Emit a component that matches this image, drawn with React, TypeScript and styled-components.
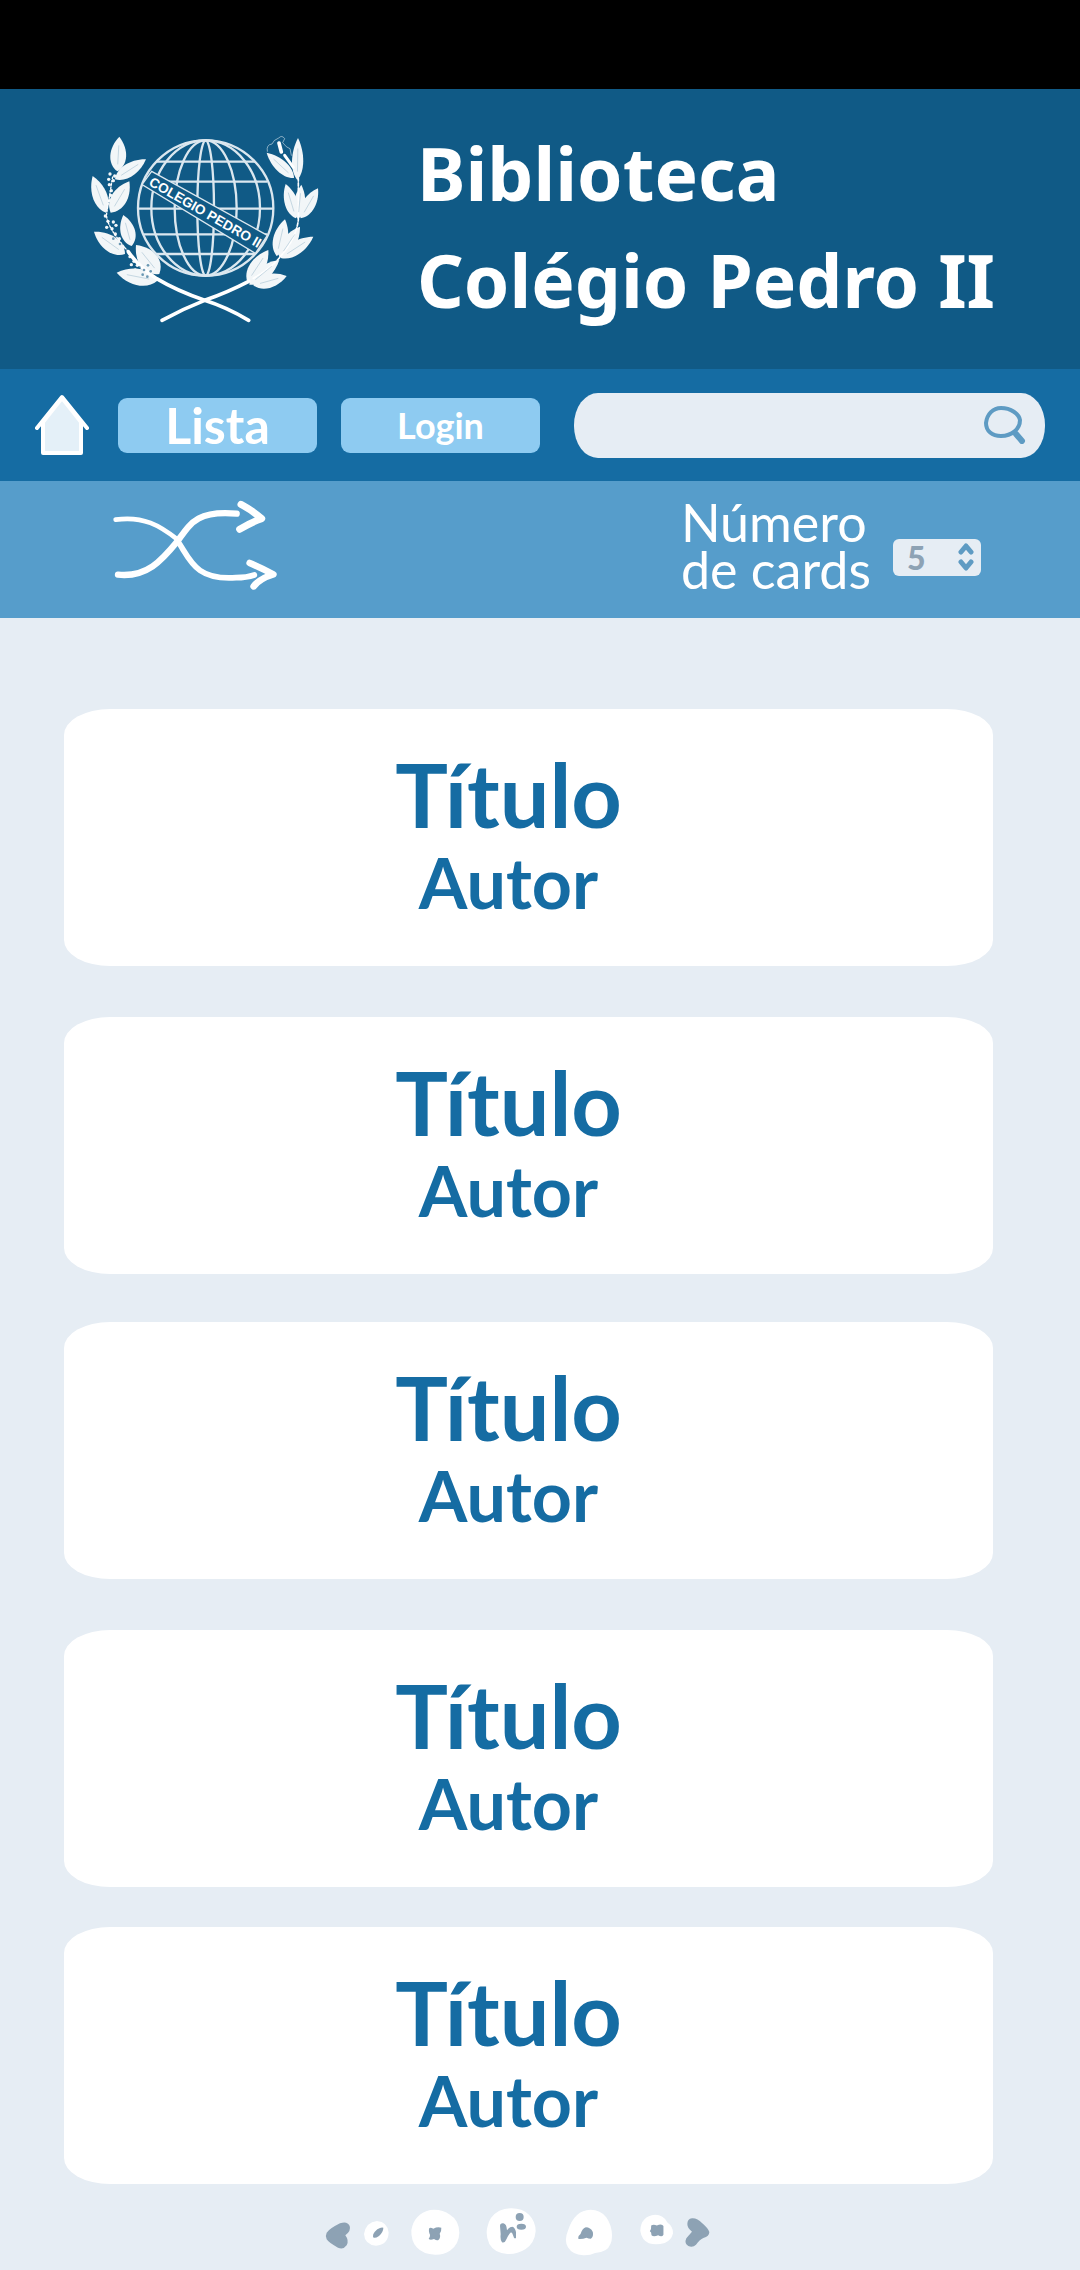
import React from "react";
import styled, { createGlobalStyle } from "styled-components";

const color = {
  header: "#105a86",
  nav: "#156ca3",
  tools: "#569dcb",
  page: "#e6edf4",
  button: "#8ecbf1",
  accent: "#5e9bc3",
  muted: "#8da2b4",
};

const hand = `Lato, "Open Sans", sans-serif`;

const GlobalStyle = createGlobalStyle`
  *, *::before, *::after { box-sizing: border-box; }
  body { margin: 0; background: ${color.page}; font-family: ${hand}; }
`;

const Page = styled.div`
  min-height: 100vh;
  background: ${color.page};
`;

const StatusBar = styled.div`
  height: 89px;
  background: #000;
`;

const Header = styled.header`
  display: flex;
  align-items: center;
  gap: 97px;
  padding: 30px 40px 36px 90px;
  background: ${color.header};
  color: #fff;
`;

const Crest = styled.svg`
  flex: none;
  width: 230px;
  height: 200px;
`;

const SiteTitle = styled.h1`
  margin: 0;
  font: 700 73px/107px "Noto Sans", sans-serif;
`;

const Line = styled.span`
  display: block;
  white-space: nowrap;
`;

const Nav = styled.nav`
  display: flex;
  align-items: center;
  height: 112px;
  padding: 0 35px;
  background: ${color.nav};
`;

const HomeLink = styled.a`
  display: block;
  height: 62px;
  margin-right: 29px;
`;

const Drawing = styled.svg`
  display: block;
`;

const NavButton = styled.button<{ $size: number }>`
  flex: none;
  width: 199px;
  height: 55px;
  margin-right: 24px;
  padding: 0;
  border: 0;
  border-radius: 9px;
  background: ${color.button};
  color: #fff;
  font: 700 ${(p) => p.$size}px/55px ${hand};
`;

const SearchForm = styled.form`
  flex: 1;
  display: flex;
  align-items: center;
  min-width: 0;
  height: 65px;
  margin-left: 10px;
  padding: 0 19px 0 24px;
  border-radius: 24px / 32px;
  background: ${color.page};
`;

const SearchInput = styled.input`
  flex: 1;
  min-width: 0;
  border: 0;
  outline: 0;
  background: transparent;
  color: ${color.nav};
  font: 32px/40px ${hand};
`;

const IconButton = styled.button`
  display: block;
  padding: 0;
  border: 0;
  background: transparent;
`;

const Tools = styled.section`
  display: flex;
  align-items: center;
  justify-content: space-between;
  height: 137px;
  padding: 0 99px 7px 110px;
  background: ${color.tools};
`;

const CountField = styled.div`
  display: flex;
  align-items: flex-end;
  gap: 22px;
`;

const CountLabel = styled.label`
  color: #fff;
  font: 52px/47px ${hand};
`;

const SelectBox = styled.div`
  position: relative;
  width: 88px;
  height: 37px;
  margin-bottom: 17px;
`;

const CountSelect = styled.select`
  appearance: none;
  width: 100%;
  height: 100%;
  padding: 0 0 0 14px;
  border: 0;
  border-radius: 6px;
  background: ${color.page};
  color: ${color.muted};
  font: 900 32px/37px ${hand};
`;

const Chevrons = styled.svg`
  position: absolute;
  top: 4px;
  right: 7px;
  pointer-events: none;
`;

const Cards = styled.main`
  display: flex;
  flex-direction: column;
  padding: 91px 87px 0 64px;
`;

const Card = styled.article`
  display: flex;
  flex-direction: column;
  justify-content: center;
  align-items: center;
  height: 257px;
  padding-right: 40px;
  border-radius: 46px / 26px;
  background: #fff;
  color: ${color.nav};

  & + & { margin-top: 51px; }
  &:nth-child(odd) { margin-top: 48px; }
  &:first-child { margin-top: 0; }
  &:last-child { margin-top: 40px; }
`;

const BookTitle = styled.h2`
  margin: 0;
  font: 700 88px/88px ${hand};
`;

const Author = styled.p`
  margin: 0;
  font: 700 70px/88px ${hand};
`;

const Pager = styled.nav`
  display: flex;
  justify-content: center;
  padding: 24px 44px 14px 0;
`;

type Leaf = [number, number, number, number, number];

const leaves: Leaf[] = [
  [172, 184, 178, 80, 48], [165, 208, 258, 148, 40], [138, 308, 98, 198, 44],
  [152, 308, 208, 214, 48], [215, 408, 190, 315, 44], [195, 432, 102, 365, 48],
  [298, 492, 228, 405, 58], [292, 512, 170, 488, 50],
  [712, 210, 714, 84, 34], [702, 204, 620, 128, 36], [708, 325, 677, 222, 40],
  [714, 327, 724, 224, 34], [722, 325, 774, 235, 40], [650, 438, 675, 328, 44],
  [658, 442, 720, 350, 42], [662, 444, 760, 380, 40], [562, 516, 625, 420, 46],
  [568, 524, 658, 450, 40], [580, 526, 680, 498, 42],
];

const leafPath = ([x, y, tx, ty, w]: Leaf) => {
  const dx = tx - x;
  const dy = ty - y;
  const len = Math.hypot(dx, dy);
  const nx = (-dy / len) * w * 0.66;
  const ny = (dx / len) * w * 0.66;
  const at = (t: number, s: number) => `${x + dx * t + nx * s} ${y + dy * t + ny * s}`;
  return `M${x} ${y}C${at(0.2, 1)} ${at(0.65, 1)} ${tx} ${ty}C${at(0.65, -1)} ${at(0.2, -1)} ${x} ${y}Z`;
};

const veinPath = ([x, y, tx, ty]: Leaf) =>
  `M${x + (tx - x) * 0.2} ${y + (ty - y) * 0.2}L${x + (tx - x) * 0.75} ${y + (ty - y) * 0.75}`;

const berries: [number, number][] = [
  [150, 192], [164, 198], [146, 208], [160, 212], [148, 224], [154, 242], [152, 256],
  [148, 272], [136, 318], [144, 334], [160, 336], [140, 352], [156, 356], [168, 346],
  [166, 372], [178, 386], [172, 400], [190, 412], [210, 440], [222, 454], [214, 464],
  [232, 466], [226, 480], [246, 460],
];

const seeds: [number, number][] = [
  [160, 386], [180, 402], [238, 472], [252, 480], [264, 466], [248, 494], [272, 484], [262, 500],
];

function SchoolCrest() {
  return (
    <Crest viewBox="90 48 690 600" role="img" aria-label="Colégio Pedro II">
      <g fill="none" stroke="#fff" strokeLinecap="round">
        <path d="M566 631Q500 592 434 571Q350 542 290 506Q235 470 205 425" strokeWidth="11" />
        <path d="M306 631Q370 596 434 571Q505 546 566 514" strokeWidth="11" />
        <path d="M580 505Q640 470 664 436Q708 385 715 330V205" strokeWidth="5" strokeDasharray="10 5" />
        <path d="M205 425Q135 345 140 310L158 200" strokeWidth="4" strokeDasharray="5 5" />
        <path d="M622 124Q618 104 636 102Q640 90 656 84Q666 74 674 86L668 98Q680 114 690 116L694 136" strokeWidth="3" strokeOpacity="0.5" />
        <path d="M657 99L664 126" strokeWidth="11" />
        <path d="M674 136L700 172" strokeWidth="9" />
      </g>
      <g fill="#fff" opacity="0.95">
        {leaves.map((leaf, i) => <path key={i} d={leafPath(leaf)} />)}
        {berries.map(([x, y], i) => <circle key={i} cx={x} cy={y} r="5" />)}
      </g>
      <g stroke={color.header} strokeOpacity="0.2" strokeWidth="3">
        {leaves.map((leaf, i) => <path key={i} d={veinPath(leaf)} />)}
      </g>
      <g fill={color.header} opacity="0.6">
        {seeds.map(([x, y], i) => <circle key={i} cx={x} cy={y} r="4" />)}
      </g>
      <g fill="none" stroke="#dbe7ef" strokeWidth="7">
        <circle cx="437" cy="294" r="203" />
        <ellipse cx="437" cy="294" rx="25" ry="203" />
        <ellipse cx="437" cy="294" rx="93" ry="203" />
        <ellipse cx="437" cy="294" rx="163" ry="203" />
        <path d="M289 155H585M252 215H622M234 296H640M252 373H622M289 432H585" />
      </g>
      <path d="M275 184L622 376L586 430L246 224Z" fill={color.header} stroke="#dbe7ef" strokeWidth="4" />
      <text
        transform="translate(264 224) rotate(30)"
        fill="#fff"
        fontFamily="Liberation Sans, sans-serif"
        fontWeight="700"
        fontSize="41"
      >
        COLEGIO PEDRO II
      </text>
    </Crest>
  );
}

interface PageMark {
  label: string;
  left: number;
  width: number;
  blob?: string;
  mark: string;
}

/* Every mark shares one 3x drawing grid, 144 units tall. */
const pageMarks: PageMark[] = [
  {
    label: "Página anterior", left: 66, width: 105,
    mark: "M80 72Q88 60 120 44Q142 36 149 52Q154 66 136 80Q148 96 140 110Q130 124 114 117Q86 102 80 92Q75 82 80 72Z",
  },
  {
    label: "Primeira página", left: 171, width: 129,
    blob: "M231 37Q262 39 266 72Q264 108 228 111Q194 108 192 76Q198 40 231 37Z",
    mark: "M219 84Q218 74 232 62Q244 54 250 57Q250 70 237 82Q222 92 219 84Z",
  },
  {
    label: "Página 2", left: 300, width: 219,
    blob: "M390 4Q425 0 450 18Q477 34 478 72Q477 108 450 126Q430 139 405 138Q370 138 350 116Q333 98 334 65Q342 16 390 4Z",
    mark: "M387 60Q390 54 400 60Q412 54 424 57Q425 66 419 75Q423 86 416 93Q412 98 402 91Q390 96 386 90Q393 82 388 74Q386 66 387 60Z",
  },
  {
    label: "Página atual", left: 519, width: 234,
    blob: "M632 -1Q665 -2 687 18Q707 38 707 68Q704 104 676 122Q650 138 622 136Q584 134 568 106Q556 80 562 56Q568 22 598 6Q614 -1 632 -1Z",
    mark: "M600 52Q600 43 610 44Q620 46 621 65Q629 54 637 54Q645 56 648 70V88Q642 92 640 82Q637 72 633 71Q626 76 618 94Q614 104 606 101Q600 96 602 76ZM671 25A12 12 0 1 1 647 25A12 12 0 1 1 671 25ZM678 54A14 9 0 1 1 650 54A14 9 0 1 1 678 54Z",
  },
  {
    label: "Página 4", left: 753, width: 235,
    blob: "M872 3Q902 3 920 26Q936 48 937 82Q936 112 918 124Q904 132 886 133Q870 141 850 140Q818 139 804 116Q792 94 804 66Q824 4 872 3Z",
    mark: "M835 88Q834 82 842 76Q848 58 858 56Q872 56 879 70Q882 84 873 90Q866 90 860 87Q848 92 836 91Z",
  },
  {
    label: "Última página", left: 988, width: 151,
    blob: "M1067 18Q1092 18 1104 41Q1122 54 1121 74Q1116 96 1096 103Q1070 111 1048 104Q1026 94 1022 66Q1024 22 1067 18Z",
    mark: "M1055 50Q1062 46 1072 50Q1088 44 1092 52V78Q1088 86 1076 80Q1062 86 1056 80Q1056 70 1051 68Q1056 60 1055 50Z",
  },
  {
    label: "Próxima página", left: 1139, width: 105,
    mark: "M1164 46Q1164 31 1178 29Q1194 28 1208 43Q1226 58 1230 70Q1230 84 1212 88Q1202 92 1190 108Q1180 118 1167 112Q1154 104 1161 89Q1168 80 1178 69Q1164 58 1164 46Z",
  },
];

const books = Array.from({ length: 5 }, () => ({ title: "Título", author: "Autor" }));

export default function App() {
  return (
    <Page>
      <GlobalStyle />
      <StatusBar />
      <Header>
        <SchoolCrest />
        <SiteTitle>
          <Line>Biblioteca</Line>
          <Line>Colégio Pedro II</Line>
        </SiteTitle>
      </Header>

      <Nav aria-label="Principal">
        <HomeLink href="#" aria-label="Início">
          <Drawing width="54" height="62" viewBox="0 0 54 62">
            <path d="M8 28L27 4L46 28V59H8Z" fill="#e4f0f8" stroke="#fff" strokeWidth="4" strokeLinejoin="round" />
            <path d="M2 34L27 3L52 34" fill="none" stroke="#fff" strokeWidth="4" strokeLinecap="round" strokeLinejoin="round" />
          </Drawing>
        </HomeLink>
        <NavButton type="button" $size={50}>Lista</NavButton>
        <NavButton type="button" $size={36}>Login</NavButton>
        <SearchForm role="search" onSubmit={(e) => e.preventDefault()}>
          <SearchInput type="search" aria-label="Buscar" />
          <IconButton type="submit" aria-label="Pesquisar">
            <Drawing width="42" height="38" viewBox="0 0 42 38" fill="none" stroke={color.accent} strokeLinecap="round">
              <path d="M17 2C27 2 35 8 36 14C36 23 28 30 17 30C8 30 2 25 2 17C3 8 9 2 17 2Z" strokeWidth="4" />
              <path d="M32 28L38 35" strokeWidth="6" />
            </Drawing>
          </IconButton>
        </SearchForm>
      </Nav>

      <Tools>
        <IconButton type="button" aria-label="Embaralhar">
          <Drawing width="170" height="94" viewBox="90 70 510 282" fill="none" stroke="#fff" strokeLinecap="round" strokeLinejoin="round">
            <path d="M107 132C190 120 240 150 293 192" strokeWidth="14" />
            <path d="M293 196C330 250 345 315 468 306Q500 306 523 298" strokeWidth="17" />
            <path d="M114 297C200 306 245 255 293 196C330 145 350 103 470 114" strokeWidth="19" />
            <path d="M483 86Q520 106 545 129Q516 139 479 161" strokeWidth="21" />
            <path d="M509 262Q548 279 580 296Q540 308 521 332" strokeWidth="20" />
          </Drawing>
        </IconButton>
        <CountField>
          <CountLabel htmlFor="card-count">
            <Line>Número</Line>
            <Line>de cards</Line>
          </CountLabel>
          <SelectBox>
            <CountSelect id="card-count" defaultValue="5">
              <option>5</option>
              <option>10</option>
              <option>20</option>
            </CountSelect>
            <Chevrons width="16" height="28" viewBox="0 0 16 28" fill="none" stroke={color.accent} strokeWidth="5" strokeLinecap="round" strokeLinejoin="round">
              <path d="M3 9L8 3L13 9M3 19L8 25L13 19" />
            </Chevrons>
          </SelectBox>
        </CountField>
      </Tools>

      <Cards>
        {books.map((book, i) => (
          <Card key={i}>
            <BookTitle>{book.title}</BookTitle>
            <Author>{book.author}</Author>
          </Card>
        ))}
      </Cards>

      <Pager aria-label="Páginas">
        {pageMarks.map(({ label, left, width, blob, mark }) => (
          <IconButton key={label} type="button" aria-label={label}>
            <Drawing width={Math.round(width / 3)} height="48" viewBox={`${left} -2 ${width} 144`}>
              {blob && <path d={blob} fill="#fff" />}
              <path d={mark} fill={color.muted} />
            </Drawing>
          </IconButton>
        ))}
      </Pager>
    </Page>
  );
}
